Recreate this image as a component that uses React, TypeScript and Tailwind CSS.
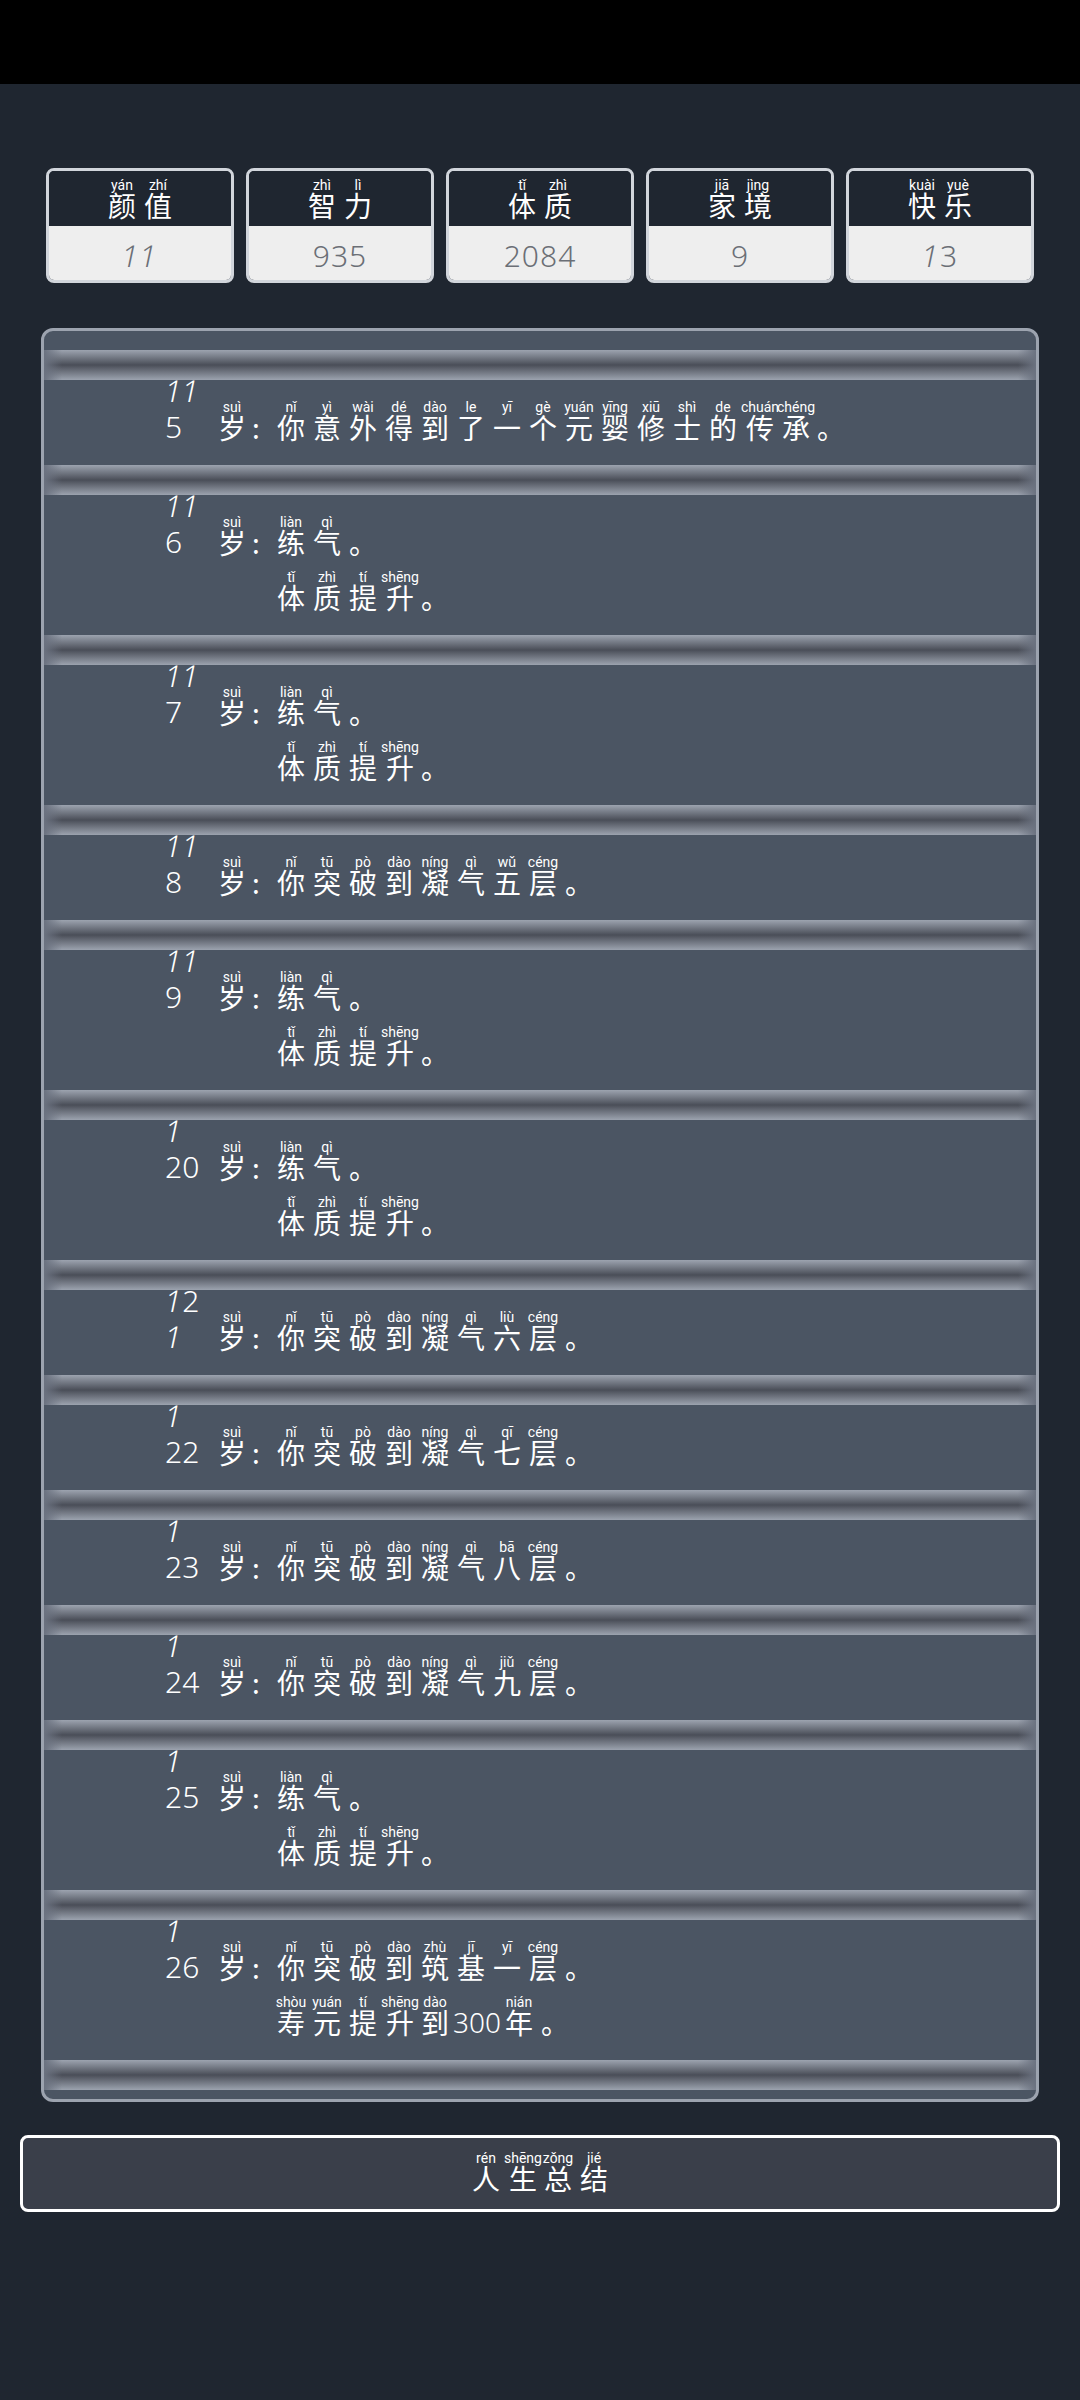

const CJK = "font-['Noto_Sans_CJK_SC',sans-serif]";

type Tok = [string, string] | string;

function R({ c, p }: { c: string; p: string }) {
  return (
    <span className="inline-block w-[36px] text-center">
      <ruby className="[ruby-position:over]">
        {c}
        <rt className="relative top-[1px] font-['Roboto',sans-serif] text-[14px] leading-[14px] font-normal">{p}</rt>
      </ruby>
    </span>
  );
}

function Num({ v }: { v: string }) {
  return (
    <>
      {v.split("").map((d, i) =>
        d === "1" ? (
          <span key={i} className="inline-block -skew-x-12">
            {d}
          </span>
        ) : (
          <span key={i}>{d}</span>
        ),
      )}
    </>
  );
}

function Line({ toks }: { toks: Tok[] }) {
  return (
    <div className="flex h-[55px] items-end pb-[5px]">
      {toks.map((t, i) =>
        typeof t === "string" ? (
          <span key={i} className={t === "。" ? "inline-block w-[36px] text-center" : "font-['Noto_Sans',sans-serif] font-light"}>
            {t}
          </span>
        ) : (
          <R key={i} c={t[0]} p={t[1]} />
        ),
      )}
    </div>
  );
}

const lx: Tok[][] = [[["练", "liàn"], ["气", "qì"], "。"], [["体", "tǐ"], ["质", "zhì"], ["提", "tí"], ["升", "shēng"], "。"]];
const tp = (a: [string, string], b: [string, string]): Tok[][] => [
  [["你", "nǐ"], ["突", "tū"], ["破", "pò"], ["到", "dào"], ["凝", "níng"], ["气", "qì"], a, b, "。"],
];

const rows: { age: string; lines: Tok[][] }[] = [
  {
    age: "115",
    lines: [[["你", "nǐ"], ["意", "yì"], ["外", "wài"], ["得", "dé"], ["到", "dào"], ["了", "le"], ["一", "yī"], ["个", "gè"], ["元", "yuán"], ["婴", "yīng"], ["修", "xiū"], ["士", "shì"], ["的", "de"], ["传", "chuán"], ["承", "chéng"], "。"]],
  },
  { age: "116", lines: lx },
  { age: "117", lines: lx },
  { age: "118", lines: tp(["五", "wǔ"], ["层", "céng"]) },
  { age: "119", lines: lx },
  { age: "120", lines: lx },
  { age: "121", lines: tp(["六", "liù"], ["层", "céng"]) },
  { age: "122", lines: tp(["七", "qī"], ["层", "céng"]) },
  { age: "123", lines: tp(["八", "bā"], ["层", "céng"]) },
  { age: "124", lines: tp(["九", "jiǔ"], ["层", "céng"]) },
  { age: "125", lines: lx },
  {
    age: "126",
    lines: [
      [["你", "nǐ"], ["突", "tū"], ["破", "pò"], ["到", "dào"], ["筑", "zhù"], ["基", "jī"], ["一", "yī"], ["层", "céng"], "。"],
      [["寿", "shòu"], ["元", "yuán"], ["提", "tí"], ["升", "shēng"], ["到", "dào"], "300", ["年", "nián"], "。"],
    ],
  },
];

const stats: { l: Tok[]; v: string }[] = [
  { l: [["颜", "yán"], ["值", "zhí"]], v: "11" },
  { l: [["智", "zhì"], ["力", "lì"]], v: "935" },
  { l: [["体", "tǐ"], ["质", "zhì"]], v: "2084" },
  { l: [["家", "jiā"], ["境", "jìng"]], v: "9" },
  { l: [["快", "kuài"], ["乐", "yuè"]], v: "13" },
];

function Divider() {
  return (
    <div className="h-[30px] bg-[linear-gradient(90deg,#6b7280,transparent_18px,transparent_calc(100%-18px),#6b7280),linear-gradient(180deg,#9ca3af,#4a4e58_50%,#9ca3af)]" />
  );
}

export default function App() {
  return (
    <div className={`min-h-[2400px] bg-[#1f2630] text-white ${CJK}`}>
      <div className="h-[84px] bg-black" />
      <div className="flex gap-[12px] px-[46px] pt-[84px]">
        {stats.map((s) => (
          <div key={s.v} className="h-[115px] w-[188px] overflow-hidden rounded-[8px] border-[3px] border-[#d1d5db]">
            <div className="flex h-[55px] items-end justify-center bg-[#1f2630] pb-[3px] text-[28px] leading-[36px]">
              {s.l.map((t, i) => (
                <R key={i} c={(t as [string, string])[0]} p={(t as [string, string])[1]} />
              ))}
            </div>
            <div className="flex h-[54px] items-center justify-center bg-[#eeeeee] pt-[5px] font-['Noto_Sans',sans-serif] text-[30px] font-light tracking-[1px] text-[#6b6f76]">
              <Num v={s.v} />
            </div>
          </div>
        ))}
      </div>
      <div className="mx-[41px] mt-[45px] rounded-[12px] border-[3px] border-[#9ca3af] bg-[#4b5563] pt-[19px] pb-[9px] text-[28px] leading-[36px]">
        <Divider />
        {rows.map((r) => (
          <div key={r.age}>
            <div className="flex py-[15px] pl-[121px]">
              <div className="flex h-[55px] w-[108px] shrink-0 items-end pb-[5px]">
                <span className="w-[49px] font-['Noto_Sans',sans-serif] text-[30px] font-light">
                  <Num v={r.age} />
                </span>
                <R c="岁" p="suì" />
                <span className="w-[23px] pl-[2px]">:</span>
              </div>
              <div>
                {r.lines.map((l, j) => (
                  <Line key={j} toks={l} />
                ))}
              </div>
            </div>
            <Divider />
          </div>
        ))}
      </div>
      <div className="mx-[20px] mt-[33px] flex h-[77px] items-end justify-center rounded-[8px] border-[3px] border-white bg-[#3a3f4a] pb-[13px] text-[28px] leading-[36px]">
        <R c="人" p="rén" />
        <R c="生" p="shēng" />
        <R c="总" p="zǒng" />
        <R c="结" p="jié" />
      </div>
    </div>
  );
}
